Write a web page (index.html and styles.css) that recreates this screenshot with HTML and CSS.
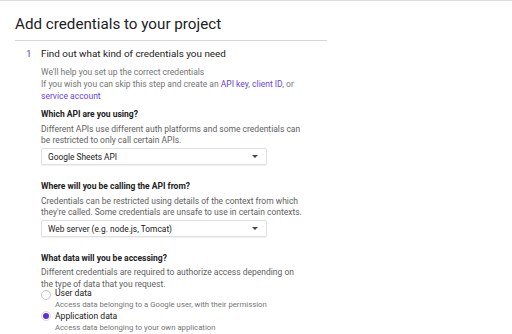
FILE: index.html
```html
<!DOCTYPE html>
<html>
<head>
<meta charset="utf-8">
<link rel="stylesheet" href="styles.css">
</head>
<body>
<div class="page">
  <h1 class="title">Add credentials to your project</h1>
  <div class="divider"></div>
  <div class="step">
    <div class="step-num">1</div>
    <div class="step-title">Find out what kind of credentials you need</div>
  </div>
  <div class="content">
    <p class="desc">We'll help you set up the correct credentials<br>If you wish you can skip this step and create an <a class="link">API key</a>, <a class="link">client ID</a>, or<br><a class="link">service account</a></p>

    <h2 class="q q-first">Which API are you using?</h2>
    <p class="text">Different APIs use different auth platforms and some credentials can<br>be restricted to only call certain APIs.</p>
    <div class="select"><span>Google Sheets API</span><span class="arrow"></span></div>

    <h2 class="q">Where will you be calling the API from?</h2>
    <p class="text">Credentials can be restricted using details of the context from which<br>they're called. Some credentials are unsafe to use in certain contexts.</p>
    <div class="select"><span>Web server (e.g. node.js, Tomcat)</span><span class="arrow"></span></div>

    <h2 class="q">What data will you be accessing?</h2>
    <p class="text text-wide">Different credentials are required to authorize access depending on<br>the type of data that you request.</p>
    <div class="radio-row radio-first"><span class="radio radio-low"></span><span class="radio-label">User data</span></div>
    <div class="radio-sub">Access data belonging to a Google user, with their permission</div>
    <div class="radio-row"><span class="radio checked"></span><span class="radio-label">Application data</span></div>
    <div class="radio-sub">Access data belonging to your own application</div>
  </div>
</div>
</body>
</html>
```
FILE: styles.css
```css
html, body {
  margin: 0;
  padding: 0;
  background: #ffffff;
}
body {
  font-family: Roboto, "Liberation Sans", Arial, sans-serif;
  color: #212121;
  overflow: hidden;
}
.page {
  border-top: 1px solid #dcdcdc;
  padding-left: 15px;
  height: 333px;
}
.title {
  margin: 13px 0 0;
  font-size: 15.2px;
  font-weight: 400;
  line-height: 20px;
  color: #202124;
}
.divider {
  width: 312px;
  border-top: 1px solid #d6d6d6;
  margin-top: 6px;
}
.step {
  display: flex;
  margin-top: 6px;
  line-height: 14px;
  font-size: 9.9px;
}
.step-num {
  width: 15px;
  padding-left: 11px;
  color: #6a3fe0;
}
.step-title {
  color: #212121;
}
.content {
  margin-left: 26px;
}
.desc {
  margin: 5px 0 0;
  font-size: 8.5px;
  line-height: 12px;
  color: #757575;
}
.link {
  color: #6a3fe0;
  text-decoration: none;
}
.q {
  margin: 15px 0 0;
  font-size: 8.5px;
  font-weight: 700;
  line-height: 12px;
  color: #212121;
}
.q-first {
  margin-top: 6px;
}
.text {
  margin: 4px 0 0;
  font-size: 8.5px;
  line-height: 11px;
  color: #616161;
}
.text-wide {
  margin-top: 2px;
  line-height: 12px;
}
.select {
  display: flex;
  align-items: center;
  justify-content: space-between;
  box-sizing: border-box;
  width: 226px;
  height: 17px;
  margin-top: 2px;
  padding: 0 8px 0 6px;
  border: 1px solid #e0e0e0;
  border-radius: 2px;
  box-shadow: 0 1px 1px rgba(0,0,0,0.06);
  font-size: 8.4px;
  color: #212121;
  background: #fff;
}
.arrow {
  width: 0;
  height: 0;
  border-left: 3px solid transparent;
  border-right: 3px solid transparent;
  border-top: 3px solid #444;
}
.radio-row {
  display: flex;
  align-items: center;
  height: 12px;
  font-size: 8.6px;
  line-height: 12px;
  color: #212121;
}
.radio-first {
  margin-top: -3px;
}
.radio {
  box-sizing: border-box;
  width: 10px;
  height: 10px;
  border-radius: 50%;
  border: 1px solid #c4c4c4;
  margin-right: 4px;
  display: flex;
  align-items: center;
  justify-content: center;
  background: #fff;
}
.radio-low {
  margin-top: 4px;
}
.radio.checked {
  border-color: #d9d2f3;
}
.radio.checked::after {
  content: "";
  width: 6px;
  height: 6px;
  border-radius: 50%;
  background: #5b2fd8;
}
.radio-sub {
  margin-left: 14px;
  font-size: 7.75px;
  line-height: 11px;
  color: #757575;
}
```
